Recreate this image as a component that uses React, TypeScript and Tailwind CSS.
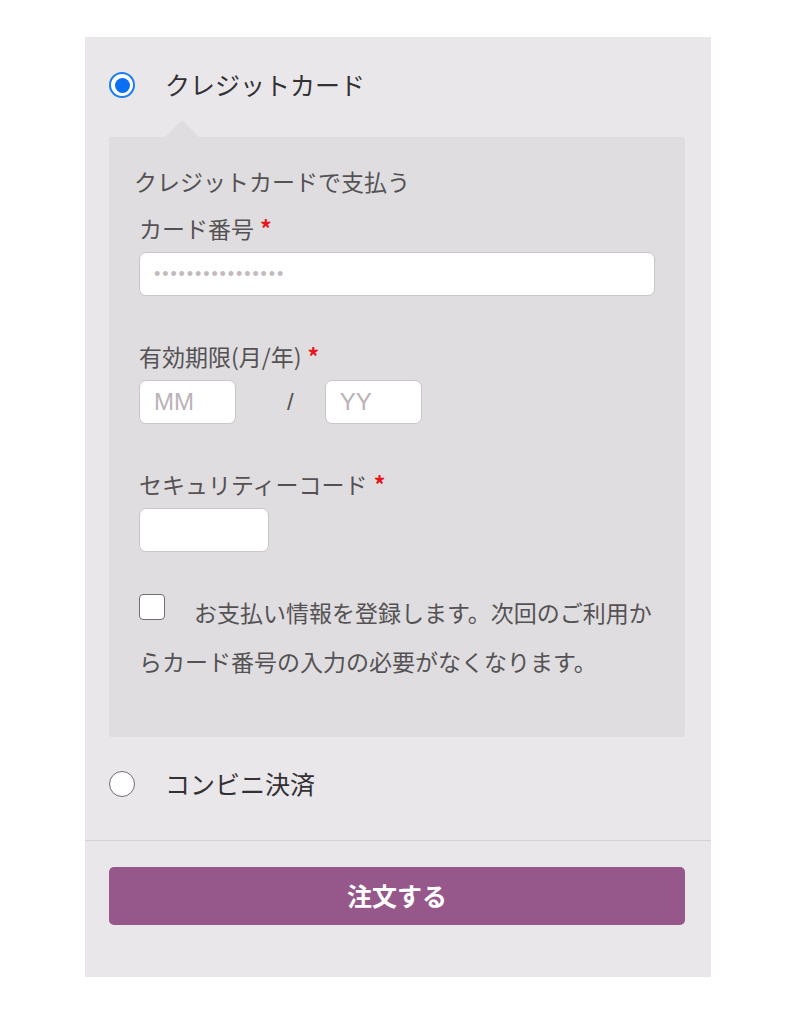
import React from 'react'

const JP = "font-['Noto_Sans_CJK_JP','Noto_Sans',sans-serif]"

function Radio({ checked }: { checked?: boolean }) {
  if (checked) {
    return (
      <span className="w-[26px] h-[26px] shrink-0 rounded-full border-[2.5px] border-[#1a7df4] bg-white flex items-center justify-center">
        <span className="w-[15px] h-[15px] rounded-full bg-[#0b6ff2]" />
      </span>
    )
  }
  return <span className="w-[26px] h-[26px] shrink-0 rounded-full border border-[#6f6d70] bg-white" />
}

function Label({ children }: { children: React.ReactNode }) {
  return (
    <p className="text-[23px] leading-[32px] text-[#545254]">
      {children}
      <span className="ml-[6px] text-[#e8141b] font-bold">*</span>
    </p>
  )
}

const inputCls =
  "h-[44px] rounded-[7px] border border-[#c9c5c9] bg-white px-[14px] text-[#444] placeholder:text-[#bab2b8] outline-none font-['Liberation_Sans',sans-serif]"

export default function App() {
  return (
    <div className={`min-h-[1024px] bg-white pt-[37px] ${JP}`}>
      <div className="ml-[85px] w-[626px] bg-[#e9e7ea] pt-[30px] pb-[52px]">
        {/* Credit card option */}
        <div className="pl-[24px] pr-[26px]">
          <div className="flex items-center h-[36px]">
            <Radio checked />
            <span className="ml-[30px] text-[25px] text-[#333133]">クレジットカード</span>
          </div>

          {/* Pointer */}
          <div className="mt-[17px] ml-[56px] w-0 h-0 border-l-[17px] border-r-[17px] border-b-[17px] border-l-transparent border-r-transparent border-b-[#dfdddf]" />

          {/* Card form */}
          <div className="rounded-[3px] bg-[#dfdddf] pt-[28px] pb-[51px] pl-[25px] pr-[30px]">
            <p className="text-[23px] leading-[32px] text-[#545254]">クレジットカードで支払う</p>

            <div className="pl-[5px]">
              <div className="mt-[15px]">
                <Label>カード番号</Label>
                <input
                  className={`mt-[8px] w-full ${inputCls} text-[18px] tracking-[1.9px] placeholder:text-[#c3b9c0]`}
                  placeholder="••••••••••••••••"
                />
              </div>

              <div className="mt-[44px]">
                <Label>有効期限(月/年)</Label>
                <div className="mt-[8px] flex items-center">
                  <input className={`w-[97px] ${inputCls} text-[24px]`} placeholder="MM" />
                  <span className="ml-[51px] mr-[31px] text-[24px] text-[#555] font-['Liberation_Sans',sans-serif]">/</span>
                  <input className={`w-[97px] ${inputCls} text-[24px]`} placeholder="YY" />
                </div>
              </div>

              <div className="mt-[44px]">
                <Label>セキュリティーコード</Label>
                <input className={`mt-[8px] w-[130px] ${inputCls} text-[24px]`} />
              </div>

              <p className="mt-[36px] text-[23px] leading-[49px] text-[#545254]">
                <span className="inline-block w-[26px] h-[26px] mr-[29px] align-[2px] rounded-[4px] border border-[#6f6d70] bg-white" />
                お支払い情報を登録します。次回のご利用か
                <br />
                らカード番号の入力の必要がなくなります。
              </p>
            </div>
          </div>

          {/* Convenience store option */}
          <div className="mt-[29px] flex items-center h-[36px]">
            <Radio />
            <span className="ml-[30px] text-[25px] text-[#333133]">コンビニ決済</span>
          </div>
        </div>

        <div className="mt-[38px] h-px bg-[#d3d1d4]" />

        <div className="pl-[24px] pr-[26px] pt-[26px]">
          <button className="w-full h-[58px] rounded-[5px] bg-[#96578a] text-white text-[25px] font-bold">
            注文する
          </button>
        </div>
      </div>
    </div>
  )
}
